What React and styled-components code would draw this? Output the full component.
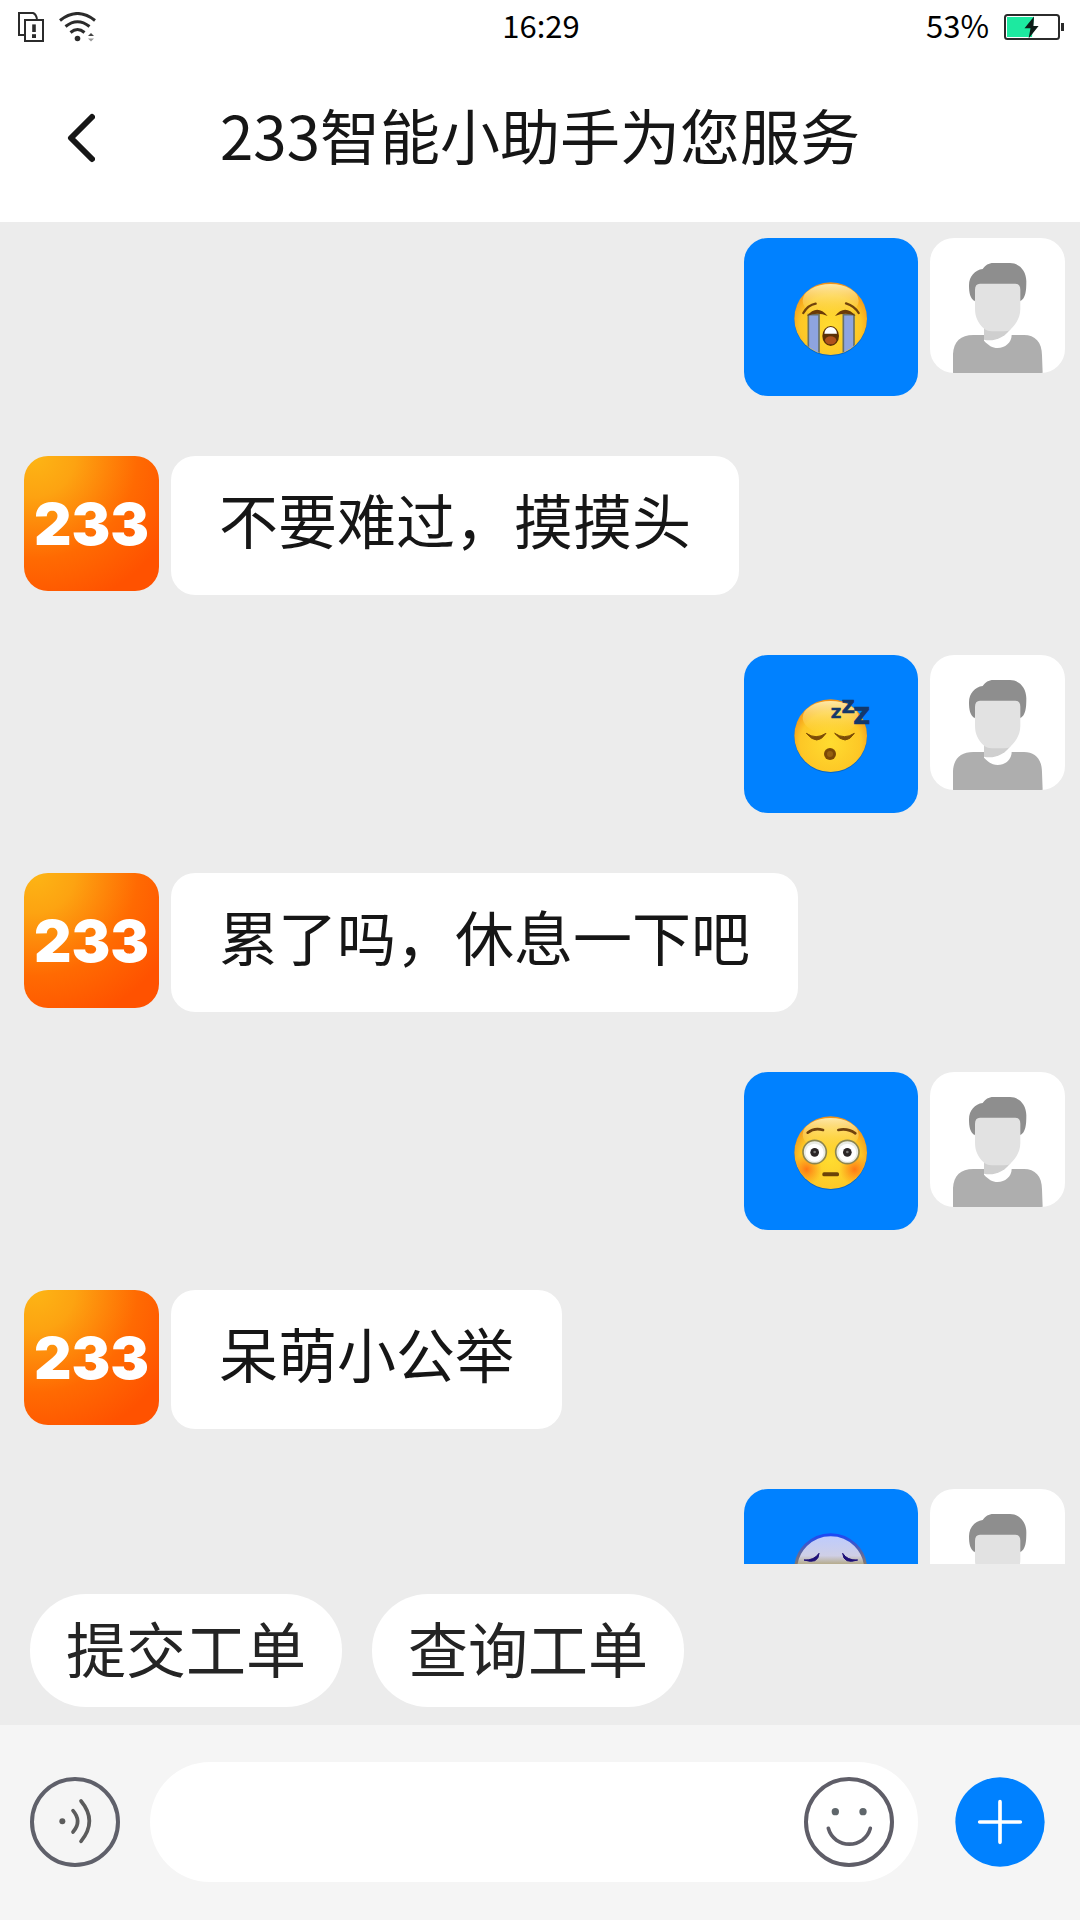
import React, { useState } from "react";
import styled, { createGlobalStyle, css } from "styled-components";

const MESSAGES = [
  { id: 1, from: "user", emoji: "cry" },
  { id: 2, from: "bot", text: "不要难过，摸摸头" },
  { id: 3, from: "user", emoji: "sleep" },
  { id: 4, from: "bot", text: "累了吗，休息一下吧" },
  { id: 5, from: "user", emoji: "flushed" },
  { id: 6, from: "bot", text: "呆萌小公举" },
  { id: 7, from: "user", emoji: "sweat" },
];

const QUICK_ACTIONS = ["提交工单", "查询工单"];

const GlobalStyle = createGlobalStyle`
  * { box-sizing: border-box; }
  body {
    margin: 0;
    background: #ececec;
    font-family: "Noto Sans CJK SC", "Noto Sans", sans-serif;
    color: #161616;
  }
  button, input { font: inherit; color: inherit; }
`;

const Screen = styled.div`
  display: flex;
  flex-direction: column;
  height: 100vh;
`;

const StatusBar = styled.div`
  display: grid;
  grid-template-columns: 1fr auto 1fr;
  align-items: center;
  height: 54px;
  padding: 0 16px 0 18px;
  background: #fff;
  color: #000;
  font-size: 31px;
  line-height: 40px;
`;

const StatusGroup = styled.div`
  display: flex;
  align-items: center;
  gap: 15px;
  ${({ $end }) => $end && css`justify-content: flex-end;`}
`;

const StatusText = styled.span`
  padding-bottom: 4px;
`;

const Header = styled.header`
  display: grid;
  grid-template-columns: 160px 1fr 160px;
  align-items: center;
  height: 168px;
  background: #fff;
`;

const Title = styled.h1`
  margin: 0;
  padding-bottom: 8px;
  font-size: 60px;
  line-height: 84px;
  font-weight: 400;
  text-align: center;
  white-space: nowrap;
`;

const IconButton = styled.button`
  display: flex;
  align-items: center;
  justify-content: center;
  flex: none;
  width: 90px;
  height: 90px;
  padding: 0;
  border: 0;
  border-radius: 50%;
  background: none;
  cursor: pointer;
`;

const BackButton = styled(IconButton)`
  justify-self: center;
`;

const Chat = styled.main`
  flex: 1;
  min-height: 0;
  overflow-y: auto;
  scrollbar-width: none;
`;

const MessageList = styled.ul`
  display: flex;
  flex-direction: column;
  gap: 60px;
  margin: 0;
  padding: 16px 15px 60px 24px;
  list-style: none;
`;

const Message = styled.li`
  display: flex;
  align-items: flex-start;
  gap: 12px;
  flex-direction: ${({ $mine }) => ($mine ? "row-reverse" : "row")};
`;

const Bubble = styled.div`
  padding: 24px 48px 38px;
  border-radius: 24px;
  background: #fff;
  font-size: 59px;
  line-height: 77px;
  ${({ $mine }) =>
    $mine &&
    css`
      padding: 40px 48px;
      background: #0081ff;
      line-height: 0;
    `}
`;

const Avatar = styled.div`
  display: flex;
  align-items: center;
  justify-content: center;
  flex: none;
  width: 135px;
  height: 135px;
  border-radius: 24px;
  overflow: hidden;
  background: #fff;
`;

const BotAvatar = styled(Avatar)`
  background: radial-gradient(circle at 8% 0, #fdb515 0, #fda311 22%, #ff6a02 56%, #ff5200 84%);
  color: #fff;
  font-family: Inter, sans-serif;
  font-size: 58px;
  font-weight: 900;
`;

const QuickBar = styled.div`
  display: flex;
  gap: 30px;
  padding: 30px 30px 18px;
`;

const QuickButton = styled.button`
  padding: 11px 36px 18px;
  border: 0;
  border-radius: 56px;
  background: #fff;
  color: #242424;
  font-size: 60px;
  line-height: 84px;
  cursor: pointer;
`;

const Composer = styled.form`
  display: flex;
  align-items: center;
  gap: 30px;
  padding: 37px 35px 38px 30px;
  background: #f5f5f5;
`;

const Field = styled.div`
  display: flex;
  align-items: center;
  flex: 1;
  min-width: 0;
  height: 120px;
  margin-right: 7px;
  padding: 0 24px 0 48px;
  border-radius: 60px;
  background: #fff;
`;

const TextInput = styled.input`
  flex: 1;
  min-width: 0;
  border: 0;
  outline: 0;
  background: none;
  font-size: 48px;
`;

function CopyAlertIcon() {
  return (
    <svg width="26" height="30" viewBox="0 0 26 30" fill="none" stroke="#2b2b2b" strokeWidth="2">
      <path d="M6 23H1V1h14q3 1 4 6" />
      <rect x="7" y="8" width="18" height="21" />
      <path d="M16 12.4v7.6" strokeWidth="3.6" />
      <path d="M16 22.2v3.8" strokeWidth="4" />
    </svg>
  );
}

function WifiIcon() {
  return (
    <svg width="38" height="30" viewBox="0 0 38 30" fill="none" stroke="#2b2b2b" strokeWidth="3">
      <path d="M1 8.500q17.500-14 35 0M6.500 14.500q12-9.500 24 0M11.500 20.500q7-6 14 0" />
      <circle cx="18.500" cy="26.500" r="2.800" fill="#2b2b2b" stroke="none" />
      <path d="M29 24l3-3 3 3z" fill="#444" stroke="none" />
      <path d="M29 26.500l3 3 3-3z" fill="#999" stroke="none" />
    </svg>
  );
}

function BatteryIcon() {
  return (
    <svg width="60" height="26" viewBox="0 0 60 26">
      <rect x="1" y="1" width="54" height="24" rx="2.500" fill="#fff" stroke="#2b2b2b" strokeWidth="2" />
      <path d="M3 3h27l-2 20H3z" fill="#1de9a0" />
      <path d="M30 2.500L20.500 14.300h6L24.600 24.500 34.600 12h-5.200z" fill="#0d1c17" />
      <rect x="57" y="9" width="3" height="8" fill="#2b2b2b" />
    </svg>
  );
}

function BackIcon() {
  return (
    <svg width="30" height="50" viewBox="0 0 30 50" fill="none" stroke="#161616" strokeWidth="6" strokeLinecap="round" strokeLinejoin="round">
      <path d="M27 4L6 25l21 21" />
    </svg>
  );
}

function VoiceIcon() {
  return (
    <svg width="90" height="90" viewBox="0 0 270 270" fill="none" stroke="#5f606a" strokeWidth="12" strokeLinecap="round">
      <circle cx="135" cy="135" r="129" />
      <circle cx="97" cy="133" r="9" fill="#5c5c5c" stroke="none" />
      <path d="M129 101q28 32 0 64M153 72q50 60 0 121" stroke="#5c5c5c" strokeWidth="11" />
    </svg>
  );
}

function SmileIcon() {
  return (
    <svg width="90" height="90" viewBox="0 0 270 270" fill="none" stroke="#5f5e68" strokeWidth="12" strokeLinecap="round">
      <circle cx="135" cy="135" r="129" />
      <circle cx="94" cy="104" r="11" fill="#5f666b" stroke="none" />
      <circle cx="177" cy="104" r="11" fill="#5f666b" stroke="none" />
      <path d="M73 154C90 217 182 217 199 154" strokeWidth="11" />
    </svg>
  );
}

function PlusIcon() {
  return (
    <svg width="90" height="90" viewBox="0 0 270 270" stroke="#fff" strokeWidth="11" strokeLinecap="round">
      <circle cx="135" cy="135" r="134" fill="#0081ff" stroke="none" />
      <path d="M135 74v122M74 135h122" />
    </svg>
  );
}

function PersonIcon() {
  return (
    <svg width="135" height="135" viewBox="0 0 405 405">
      <path d="M69 405V348C71 311 92 291 130 291H162V308C175 322 187 330 203 330C225 330 245 314 245 291H282C315 291 336 312 336 352L338 405Z" fill="#aeaeae" />
      <path d="M162 260V305C190 312 226 300 246 266Z" fill="#cfcfcf" />
      <path d="M134 190C120 180 117 165 117 142C117 115 135 96 158 93C166 82 176 75 190 75H240C268 75 289 98 289 130C289 160 287 180 271 190L262 150H142Z" fill="#8e8e8e" />
      <path d="M135 155Q135 137 150 137H256Q271 137 271 155V212C271 238 258 260 240 276Q234 280 222 280H185Q170 280 160 270C145 255 135 238 135 212Z" fill="#e2e2e2" />
    </svg>
  );
}

function FaceGradients() {
  return (
    <svg width="0" height="0" style={{ display: "block" }} aria-hidden="true">
      <defs>
        <radialGradient id="face" cx="0.5" cy="0.6" r="0.6">
          <stop offset="0" stopColor="#ffdc30" />
          <stop offset="0.7" stopColor="#fdc726" />
          <stop offset="1" stopColor="#f08f18" />
        </radialGradient>
        <linearGradient id="shine" x1="0" y1="0" x2="0" y2="1">
          <stop offset="0" stopColor="#ffeeb0" stopOpacity="0.95" />
          <stop offset="1" stopColor="#ffdc50" stopOpacity="0" />
        </linearGradient>
        <radialGradient id="blush">
          <stop offset="0" stopColor="#ff6410" stopOpacity="0.8" />
          <stop offset="1" stopColor="#ff7a10" stopOpacity="0" />
        </radialGradient>
        <linearGradient id="cold" x1="0" y1="0" x2="0" y2="1">
          <stop offset="0" stopColor="#bccbff" />
          <stop offset="0.3" stopColor="#cfcfe6" />
          <stop offset="0.42" stopColor="#b5ab8c" />
          <stop offset="1" stopColor="#ffd23a" />
        </linearGradient>
        <linearGradient id="coldEdge" x1="0" y1="0" x2="0" y2="1">
          <stop offset="0" stopColor="#1c48f5" />
          <stop offset="0.42" stopColor="#84796f" />
        </linearGradient>
        <clipPath id="faceClip">
          <circle cx="116" cy="122" r="108" />
        </clipPath>
      </defs>
    </svg>
  );
}

const EmojiSvg = styled.svg`
  width: 78px;
  height: 78px;
  overflow: visible;
`;

function Head() {
  return (
    <>
      <circle cx="116" cy="125" r="109" fill="#0a4790" opacity="0.5" />
      <circle cx="116" cy="122" r="109" fill="url(#face)" />
      <ellipse cx="116" cy="68" rx="84" ry="50" fill="url(#shine)" />
    </>
  );
}

const EMOJI = {
  cry: (
    <>
      <Head />
      <g clipPath="url(#faceClip)">
        <path d="M49 110h32v126H49zM154 110h32v126h-32z" fill="#8ea4e0" stroke="#66706a" strokeWidth="5" />
      </g>
      <path d="M34 105q14-24 37-28M162 76q26 8 38 29" fill="none" stroke="#70420c" strokeWidth="7" strokeLinecap="round" />
      <path d="M45 114q30-38 62 0q-30-14-62 0zM129 114q30-38 62 0q-30-14-62 0z" fill="#6a3a08" />
      <ellipse cx="116" cy="174" rx="25" ry="30" fill="#5b3006" />
      <path d="M97 167q3-20 19-20t19 20z" fill="#fff" />
      <ellipse cx="116" cy="187" rx="17" ry="12" fill="#b0521c" />
    </>
  ),
  sleep: (
    <>
      <Head />
      <path d="M43 115q29 20 59 0q-26 40-59 0zM128 115q29 20 59 0q-26 40-59 0z" fill="#7c4c06" stroke="#7c4c06" strokeWidth="3" strokeLinejoin="round" />
      <circle cx="114" cy="177" r="18" fill="#7a4806" />
      <circle cx="114" cy="177" r="9" fill="#96610f" />
      <g fill="#14386a" stroke="#14386a" strokeWidth="2" fontFamily="DejaVu Sans" fontWeight="700">
        <text x="117" y="70" fontSize="42">Z</text>
        <text x="149" y="53" fontSize="54">Z</text>
        <text x="184" y="86" fontSize="70">Z</text>
      </g>
    </>
  ),
  flushed: (
    <>
      <Head />
      <circle cx="44" cy="172" r="46" fill="url(#blush)" clipPath="url(#faceClip)" />
      <circle cx="188" cy="172" r="46" fill="url(#blush)" clipPath="url(#faceClip)" />
      <path d="M47 62q20-16 46-8M139 54q28-6 51 10" fill="none" stroke="#70420c" strokeWidth="8" strokeLinecap="round" />
      {[68, 166].map((cx) => (
        <g key={cx}>
          <circle cx={cx} cy="120" r="35" fill="#e9ebe4" stroke="#8c8550" strokeWidth="5" />
          <circle cx={cx} cy="122" r="27" fill="#fff" />
          <circle cx={cx} cy="121" r="13" fill="#2a2526" />
          <circle cx={cx} cy="120" r="4" fill="#777" />
        </g>
      ))}
      <rect x="91" y="181" width="50" height="12" rx="5" fill="#6b4208" />
    </>
  ),
  sweat: (
    <>
      <circle cx="116" cy="122" r="105" fill="url(#cold)" stroke="url(#coldEdge)" strokeWidth="9" />
      <path d="M36 93q30 2 45-20q-2 34-45 20zM152 73q14 22 45 20q-42 14-45-20z" fill="#1e0f78" stroke="#1e0f78" strokeWidth="3" />
      <ellipse cx="116" cy="178" rx="26" ry="16" fill="#6a3a08" />
    </>
  ),
};

function ChatMessage({ message }) {
  if (message.from === "user") {
    return (
      <Message $mine>
        <Avatar>
          <PersonIcon />
        </Avatar>
        <Bubble $mine>
          <EmojiSvg viewBox="0 0 234 234" role="img" aria-label={message.emoji}>
            {EMOJI[message.emoji]}
          </EmojiSvg>
        </Bubble>
      </Message>
    );
  }

  return (
    <Message>
      <BotAvatar>233</BotAvatar>
      <Bubble>{message.text}</Bubble>
    </Message>
  );
}

export default function App() {
  const [draft, setDraft] = useState("");

  return (
    <Screen>
      <GlobalStyle />
      <FaceGradients />
      <StatusBar>
        <StatusGroup>
          <CopyAlertIcon />
          <WifiIcon />
        </StatusGroup>
        <StatusText as="time">16:29</StatusText>
        <StatusGroup $end>
          <StatusText>53%</StatusText>
          <BatteryIcon />
        </StatusGroup>
      </StatusBar>
      <Header>
        <BackButton type="button" aria-label="返回">
          <BackIcon />
        </BackButton>
        <Title>233智能小助手为您服务</Title>
      </Header>
      <Chat>
        <MessageList>
          {MESSAGES.map((message) => (
            <ChatMessage key={message.id} message={message} />
          ))}
        </MessageList>
      </Chat>
      <QuickBar>
        {QUICK_ACTIONS.map((label) => (
          <QuickButton key={label} type="button">
            {label}
          </QuickButton>
        ))}
      </QuickBar>
      <Composer onSubmit={(e) => e.preventDefault()}>
        <IconButton type="button" aria-label="语音">
          <VoiceIcon />
        </IconButton>
        <Field>
          <TextInput
            type="text"
            aria-label="输入消息"
            value={draft}
            onChange={(e) => setDraft(e.target.value)}
          />
          <IconButton type="button" aria-label="表情">
            <SmileIcon />
          </IconButton>
        </Field>
        <IconButton type="button" aria-label="更多">
          <PlusIcon />
        </IconButton>
      </Composer>
    </Screen>
  );
}
